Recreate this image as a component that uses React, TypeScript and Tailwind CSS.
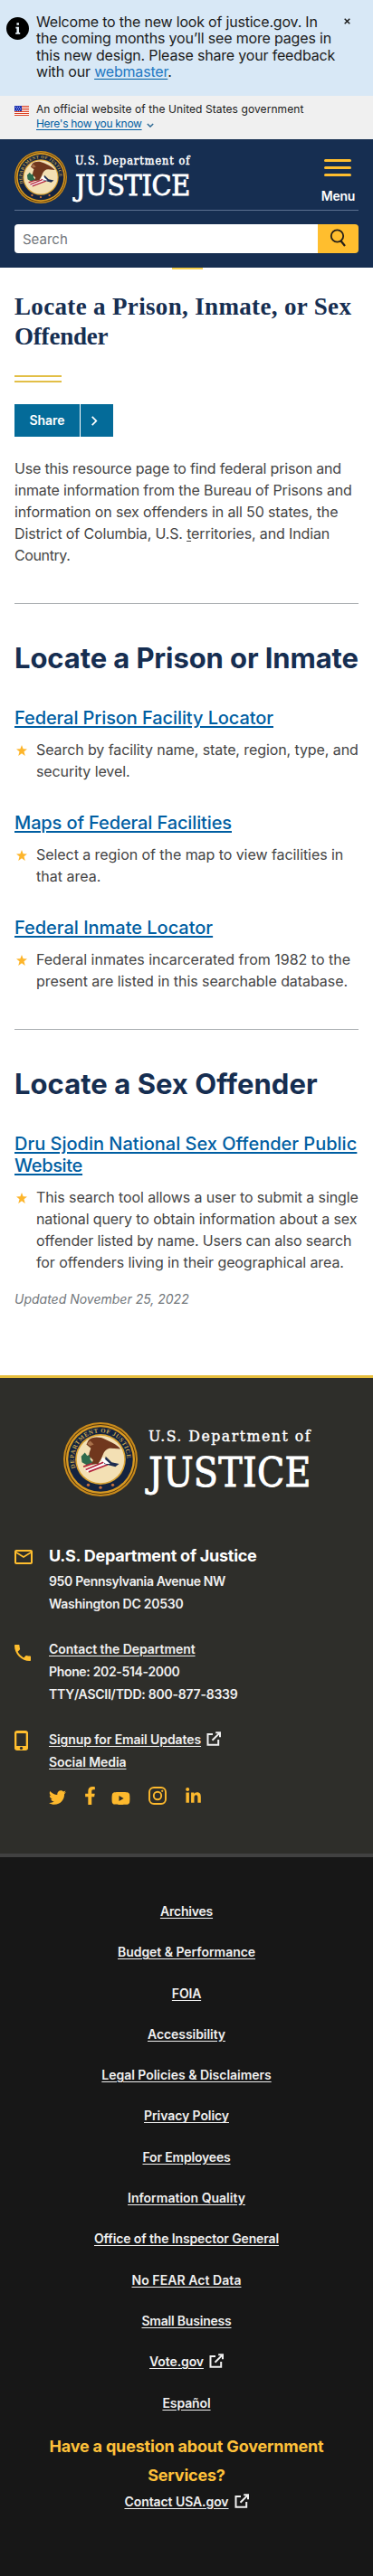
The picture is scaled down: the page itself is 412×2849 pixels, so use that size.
import React from "react";
import { FaTwitter, FaFacebookF, FaYoutube, FaLinkedinIn } from "react-icons/fa";

type Line = [string, string];

function Lines({ items }: { items: Line[] }) {
  return (
    <>
      {items.map(([text, cls]) => (
        <span key={text} className={`block whitespace-nowrap ${cls}`}>
          {text}{" "}
        </span>
      ))}
    </>
  );
}

function Seal({ className, id }: { className: string; id: string }) {
  return (
    <svg viewBox="0 0 100 100" className={className} aria-hidden="true">
      <defs>
        <path id={id} d="M16.6 61.5 A35.5 35.5 0 1 1 83.4 61.5" />
      </defs>
      <circle cx="50" cy="50" r="50" fill="#c98a1b" />
      <circle cx="50" cy="50" r="47.6" fill="#4a3312" />
      <circle cx="50" cy="50" r="46.4" fill="#d99a22" />
      <circle cx="50" cy="50" r="43.6" fill="#14233f" />
      <circle cx="50" cy="50" r="34" fill="#d8a233" />
      <circle cx="50" cy="50" r="32" fill="#f3e0b4" />
      <text fill="#c9a64e" fontSize="8.4" fontFamily="Liberation Serif, serif" fontWeight="700">
        <textPath href={`#${id}`} textLength="123">DEPARTMENT OF JUSTICE</textPath>
      </text>
      <circle cx="33.5" cy="84.5" r="2" fill="#c8703a" />
      <circle cx="50" cy="88" r="2" fill="#c8703a" />
      <circle cx="66.5" cy="84.5" r="2" fill="#c8703a" />
      <path d="M24 46l5-5 3 4 5-2-1 7 4 5-8 3-7-4z" fill="#2e6a4c" />
      <path d="M28 63l22-10 12-1 2 4-22 9-10 2z" fill="#fff" />
      <path d="M27 60l20-7M30 64l24-10M34 67l26-10" stroke="#b3243b" strokeWidth="2.2" />
      <path d="M57 46l8 8 10 2-5 4-15-4z" fill="#1c2c50" />
      <path d="M53 47l10 9-6 0-6-5z" fill="#fff" />
      <path
        d="M34 24c5-5 15-5 22-1 6 3 12 5 18 10l3 3-13-1c-5 0-8 3-10 7l-3 7-4 7-9 1 2-6-4-4c-3-4 0-8 1-12l-6-5z"
        fill="#70371d"
      />
      <path d="M36 25l-4 4 4 3 5-2z" fill="#a9714a" />
    </svg>
  );
}

function Flag() {
  return (
    <svg viewBox="0 0 16 11" className="mt-1 h-[11px] w-4 shrink-0" shapeRendering="crispEdges">
      <rect width="16" height="11" fill="#fff" />
      <path d="M0 .5h16M0 2.5h16M0 4.5h16M0 6.5h16M0 8.5h16M0 10.5h16" stroke="#db3e1f" />
      <rect width="8" height="6" fill="#1e33b1" />
      <path d="M1 1.5h1M3 1.5h1M5 1.5h1M2 3.5h1M4 3.5h1M6 3.5h1M1 5h1M3 5h1M5 5h1" stroke="#a9b4ee" />
    </svg>
  );
}

function External() {
  return (
    <svg viewBox="0 0 16 16" className="ml-1.5 inline-block h-4 w-4 align-[-2px]" fill="none" stroke="#f0f0f0" strokeWidth="2">
      <path d="M7 3H1.500v11.700h11.700V9" />
      <path d="M6.500 9.800L14.600 1.600M10.200 1.200h4.800v5" />
    </svg>
  );
}

function Star() {
  return (
    <svg viewBox="0 0 24 24" className="ml-0.5 mt-[7px] h-3 w-3 shrink-0" fill="#fdb52b">
      <path d="M12 0l3.2 8.6 8.8.5-7 5.6 2.5 9.3-7.500-5.300L4.500 24 7 14.700 0 9.100l8.800-.5z" />
    </svg>
  );
}

function Entry({ title, lines, className }: { title: Line[]; lines: Line[]; className: string }) {
  return (
    <section className={className}>
      <h3 className="text-[20px] font-medium leading-6 text-[#005ea2] underline decoration-2 underline-offset-2">
        <a href="#"><Lines items={title} /></a>
      </h3>
      <div className="mt-[11px] flex">
        <Star />
        <p className="ml-2.5 text-base leading-6 text-[#454545]"><Lines items={lines} /></p>
      </div>
    </section>
  );
}

const footerLinks: Line[] = [
  ["Archives", "tracking-[-0.2px]"],
  ["Budget & Performance", "tracking-[-0.04px]"],
  ["FOIA", "tracking-[-0.2px]"],
  ["Accessibility", "tracking-[-0.06px]"],
  ["Legal Policies & Disclaimers", "tracking-[-0.03px]"],
  ["Privacy Policy", "tracking-[-0.08px]"],
  ["For Employees", "tracking-[-0.18px]"],
  ["Information Quality", "tracking-[0px]"],
  ["Office of the Inspector General", "tracking-[-0.13px]"],
  ["No FEAR Act Data", "tracking-[0.06px]"],
  ["Small Business", "tracking-[-0.21px]"],
  ["Vote.gov", "tracking-[-0.1px]"],
  ["Español", "tracking-[-0.1px]"],
];

export default function App() {
  return (
    <div className="w-[412px] bg-white font-['Inter',sans-serif] text-[#1b1b1b]">
      <aside className="flex h-[106px] bg-[#d8e8f6] pl-[7px] pt-[15px]">
        <svg viewBox="0 0 24 24" className="mt-[4px] h-[25px] w-[25px] shrink-0">
          <circle cx="12" cy="12" r="12" fill="#000" />
          <path d="M11 6h2.400v2.400H11zM10 10.200h3.400v6h1.200V18H9.800v-1.800H11V12h-1z" fill="#e6f0f8" />
        </svg>
        <p className="ml-2 w-[335px] text-base leading-[18.4px]">
          <Lines
            items={[
              ["Welcome to the new look of justice.gov. In", "tracking-[-0.2px]"],
              ["the coming months you’ll see more pages in", "tracking-[-0.17px]"],
              ["this new design. Please share your feedback", "tracking-[-0.18px]"],
            ]}
          />
          <span className="tracking-[-0.18px]">
            with our <a href="#" className="text-[#2378c3] underline decoration-[#005ea2] underline-offset-2">webmaster</a>.
          </span>
        </p>
        <svg viewBox="0 0 8 8" className="ml-[5px] mt-[5px] h-[7px] w-[7px] shrink-0" stroke="#1b1b1b" strokeWidth="1.700">
          <path d="M.8.8l6.400 6.400M7.200.8L.8 7.200" />
        </svg>
      </aside>

      <div className="flex h-12 bg-[#f0f0f0] px-4 pt-[7px]">
        <Flag />
        <div className="ml-2 text-xs leading-4">
          <p className="whitespace-nowrap tracking-[0.08px]">An official website of the United States government</p>
          <a href="#" className="flex items-center text-[#005ea2]">
            <span className="tracking-[-0.3px] underline underline-offset-2">Here's how you know</span>
            <svg viewBox="0 0 10 6" className="ml-[5px] mt-0.5 h-[5px] w-2" fill="none" stroke="#2f6a94" strokeWidth="1.800">
              <path d="M1 1l4 4 4-4" />
            </svg>
          </a>
        </div>
      </div>

      <header className="h-[142px] bg-[#162e51] px-4 pt-[13px]">
        <div className="flex h-[66px] justify-between border-b border-[#5c7090]">
          <div className="flex">
            <Seal className="h-[58px] w-[58px]" id="seal-header" />
            <div className="ml-[9px] whitespace-nowrap font-['DejaVu_Serif_Condensed','DejaVu_Serif',serif] text-white">
              <p className="mt-px h-[18px] text-[12.500px] leading-5 tracking-[1px] [-webkit-text-stroke:0.500px_white]">U.S. Department of</p>
              <p className="mt-[2px] text-[32px] leading-[34px] tracking-[-0.3px] [-webkit-text-stroke:0.800px_white]">JUSTICE</p>
            </div>
          </div>
          <button className="mr-[4px] flex flex-col items-center pt-[9px] text-white">
            <span className="flex flex-col gap-[5px]">
              <span className="block h-[3px] w-[30px] rounded-sm bg-[#ffbe2e]" />
              <span className="block h-[3px] w-[30px] rounded-sm bg-[#ffbe2e]" />
              <span className="block h-[3px] w-[30px] rounded-sm bg-[#ffbe2e]" />
            </span>
            <span className="mt-[12px] text-sm font-semibold leading-5 tracking-[-0.3px]">Menu</span>
          </button>
        </div>
        <div className="mt-[15px] flex h-8 overflow-hidden rounded">
          <div className="flex-1 bg-white pl-[9px] text-[15px] leading-[33px] text-[#71767a]">Search</div>
          <div className="flex w-[45px] justify-center bg-[#ffbe2e] pt-[4px]">
            <svg viewBox="0 0 20 22" className="h-[22px] w-5" fill="none" stroke="#262018" strokeWidth="1.800">
              <circle cx="8.500" cy="9" r="6.700" />
              <path d="M12.200 14l4.800 6" strokeWidth="2.200" />
            </svg>
          </div>
        </div>
      </header>

      <main className="px-4">
        <div className="mx-auto h-[2px] w-[34px] translate-x-[1px] bg-[#f5cf4d]" />
        <h1 className="mt-[25px] font-['Liberation_Serif',serif] text-[27px] font-bold leading-[33px] text-[#162e51]">
          <Lines
            items={[
              ["Locate a Prison, Inmate, or Sex", "tracking-[0.34px]"],
              ["Offender", "tracking-[-0.2px]"],
            ]}
          />
        </h1>
        <div className="mt-[26px] h-2 w-[52px] border-y-2 border-[#e2bf47]" />

        <button className="mt-6 flex h-9 w-[109px] bg-[#046b99] text-white">
          <span className="w-[73px] border-r border-white text-sm font-semibold leading-9">Share</span>
          <svg viewBox="0 0 8 12" className="ml-[11px] mt-[13px] h-[11px] w-[8px]" fill="none" stroke="#fff" strokeWidth="1.900">
            <path d="M1.500 1l5 5-5 5" />
          </svg>
        </button>

        <p className="mt-[23px] text-base leading-6 text-[#454545]">
          <Lines
            items={[
              ["Use this resource page to find federal prison and", "tracking-[-0.18px]"],
              ["inmate information from the Bureau of Prisons and", "tracking-[-0.17px]"],
              ["information on sex offenders in all 50 states, the", "tracking-[-0.13px]"],
            ]}
          />
          <span className="block whitespace-nowrap tracking-[-0.14px]">
            District of Columbia, U.S. <u className="underline-offset-2">t</u>erritories, and Indian
          </span>
          <span className="block tracking-[-0.39px]">Country.</span>
        </p>

        <hr className="mt-[41px] border-[#a9aeb1]" />
        <h2 className="mt-10 whitespace-nowrap text-[31px] font-bold leading-10 tracking-[-0.1px] text-[#162e51]">
          Locate a Prison or Inmate
        </h2>
        <Entry
          className="mt-[34px]"
          title={[["Federal Prison Facility Locator", "tracking-[-0.09px]"]]}
          lines={[
            ["Search by facility name, state, region, type, and", "tracking-[-0.09px]"],
            ["security level.", "tracking-[-0.1px]"],
          ]}
        />
        <Entry
          className="mt-[33px]"
          title={[["Maps of Federal Facilities", "tracking-[-0.12px]"]]}
          lines={[
            ["Select a region of the map to view facilities in", "tracking-[-0.06px]"],
            ["that area.", "tracking-[0px]"],
          ]}
        />
        <Entry
          className="mt-[33px]"
          title={[["Federal Inmate Locator", "tracking-[-0.02px]"]]}
          lines={[
            ["Federal inmates incarcerated from 1982 to the", "tracking-[-0.01px]"],
            ["present are listed in this searchable database.", "tracking-[-0.06px]"],
          ]}
        />
        <hr className="mt-[41px] border-[#a9aeb1]" />
        <h2 className="mt-10 whitespace-nowrap text-[31px] font-bold leading-10 tracking-[0.04px] text-[#162e51]">
          Locate a Sex Offender
        </h2>
        <Entry
          className="mt-[34px]"
          title={[
            ["Dru Sjodin National Sex Offender Public", "tracking-[0px]"],
            ["Website", "tracking-[-0.33px]"],
          ]}
          lines={[
            ["This search tool allows a user to submit a single", "tracking-[-0.11px]"],
            ["national query to obtain information about a sex", "tracking-[-0.13px]"],
            ["offender listed by name. Users can also search", "tracking-[-0.15px]"],
            ["for offenders living in their geographical area.", "tracking-[-0.1px]"],
          ]}
        />
        <p className="mt-[17px] text-sm italic leading-6 text-[#71767a]">Updated November 25, 2022</p>
      </main>

      <footer className="mt-[72px]">
        <div className="h-[529px] border-t-[3px] border-[#e6bd3c] bg-[#2e2e2a] px-4 pt-[49px] text-sm font-semibold leading-[25px] text-[#f0f0f0]">
          <div className="flex pl-[54px]">
            <Seal className="h-[82px] w-[82px]" id="seal-footer" />
            <div className="ml-[12px] whitespace-nowrap font-['DejaVu_Serif_Condensed','DejaVu_Serif',serif] font-normal text-white">
              <p className="mt-[3px] h-6 text-[17.500px] leading-6 tracking-[1.500px] [-webkit-text-stroke:0.400px_white]">U.S. Department of</p>
              <p className="mt-[7px] text-[44px] leading-[44px] tracking-[0.3px] [-webkit-text-stroke:0.900px_white]">JUSTICE</p>
            </div>
          </div>

          <div className="mt-[52px] flex">
            <svg viewBox="2 4 20 16" className="mt-[7px] h-4 w-5" fill="#ffbe2e">
              <path d="M22 6c0-1.100-.9-2-2-2H4c-1.100 0-2 .9-2 2v12c0 1.100.9 2 2 2h16c1.100 0 2-.9 2-2V6zm-2 0l-8 5-8-5h16zm0 12H4V8l8 5 8-5v10z" />
            </svg>
            <div className="ml-[18px]">
              <h4 className="text-[18px] font-bold leading-[27px] tracking-[-0.26px] text-white">U.S. Department of Justice</h4>
              <p className="mt-[2px] tracking-[-0.34px]">950 Pennsylvania Avenue NW</p>
              <p className="tracking-[-0.24px]">Washington DC 20530</p>
            </div>
          </div>

          <div className="mt-[25px] flex">
            <svg viewBox="3 3 18 18" className="mr-[2px] mt-[8px] h-[18px] w-[18px]" fill="#ffbe2e">
              <path d="M6.620 10.790c1.440 2.830 3.760 5.140 6.590 6.590l2.200-2.200c.27-.27.67-.36 1.020-.24 1.120.37 2.330.57 3.570.57.55 0 1 .45 1 1V20c0 .55-.45 1-1 1-9.390 0-17-7.610-17-17 0-.55.45-1 1-1h3.500c.55 0 1 .45 1 1 0 1.250.2 2.450.57 3.570.11.35.03.74-.25 1.020l-2.200 2.200z" />
            </svg>
            <div className="ml-[18px]">
              <p><a href="#" className="tracking-[-0.06px] underline underline-offset-2">Contact the Department</a></p>
              <p className="tracking-[-0.33px]">Phone: 202-514-2000</p>
              <p className="tracking-[-0.25px]">TTY/ASCII/TDD: 800-877-8339</p>
            </div>
          </div>

          <div className="mt-[25px] flex">
            <svg viewBox="5 1 13 22" preserveAspectRatio="none" className="mr-[5px] mt-[3px] h-[22px] w-[15px]" fill="#ffbe2e">
              <path d="M15.500 1h-8C6.120 1 5 2.120 5 3.500v17C5 21.880 6.120 23 7.500 23h8c1.380 0 2.500-1.120 2.500-2.500v-17C18 2.120 16.880 1 15.500 1zm-4 21c-.83 0-1.500-.67-1.500-1.500s.67-1.500 1.500-1.500 1.500.67 1.500 1.500-.67 1.500-1.500 1.500zm4.500-4H7V4h9v14z" />
            </svg>
            <div className="ml-[18px]">
              <p><a href="#" className="tracking-[-0.09px] underline underline-offset-2">Signup for Email Updates</a><External /></p>
              <p><a href="#" className="tracking-[-0.07px] underline underline-offset-2">Social Media</a></p>
              <div className="mt-[15px] flex h-5 items-end text-[#fdb92d]">
                <FaTwitter className="-mb-0.5 h-5 w-[19px]" />
                <FaFacebookF className="ml-[20px] h-5 w-[13px]" />
                <FaYoutube className="-mb-[3px] ml-[17px] h-5 w-[21px]" />
                <svg viewBox="0 0 20 20" className="ml-5 h-5 w-5" fill="none" stroke="currentColor" strokeWidth="1.900">
                  <rect x="1" y="1" width="18" height="18" rx="5" />
                  <circle cx="10" cy="10" r="4.200" />
                  <circle cx="15.200" cy="4.800" r=".7" fill="currentColor" strokeWidth="1" />
                </svg>
                <FaLinkedinIn className="ml-5 h-[19px] w-[19px]" />
              </div>
            </div>
          </div>
        </div>

        <div className="h-[799px] border-t-[4px] border-[#414141] bg-[#171717] pt-[37px] text-center text-sm font-semibold text-[#f0f0f0]">
          <ul>
            {footerLinks.map(([text, cls]) => (
              <li key={text} className="h-[45.3px] leading-[45.3px]">
                <a href="#" className={`underline underline-offset-2 ${cls}`}>{text}</a>
                {text === "Vote.gov" && <External />}
              </li>
            ))}
          </ul>
          <h4 className="mt-[10px] text-[18px] font-bold leading-8 text-[#ffc13a]">
            <Lines
              items={[
                ["Have a question about Government", "tracking-[-0.19px]"],
                ["Services?", "tracking-[-0.2px]"],
              ]}
            />
          </h4>
          <p className="mt-px leading-6">
            <a href="#" className="tracking-[-0.08px] underline underline-offset-2">Contact USA.gov</a>
            <External />
          </p>
        </div>
      </footer>
    </div>
  );
}
